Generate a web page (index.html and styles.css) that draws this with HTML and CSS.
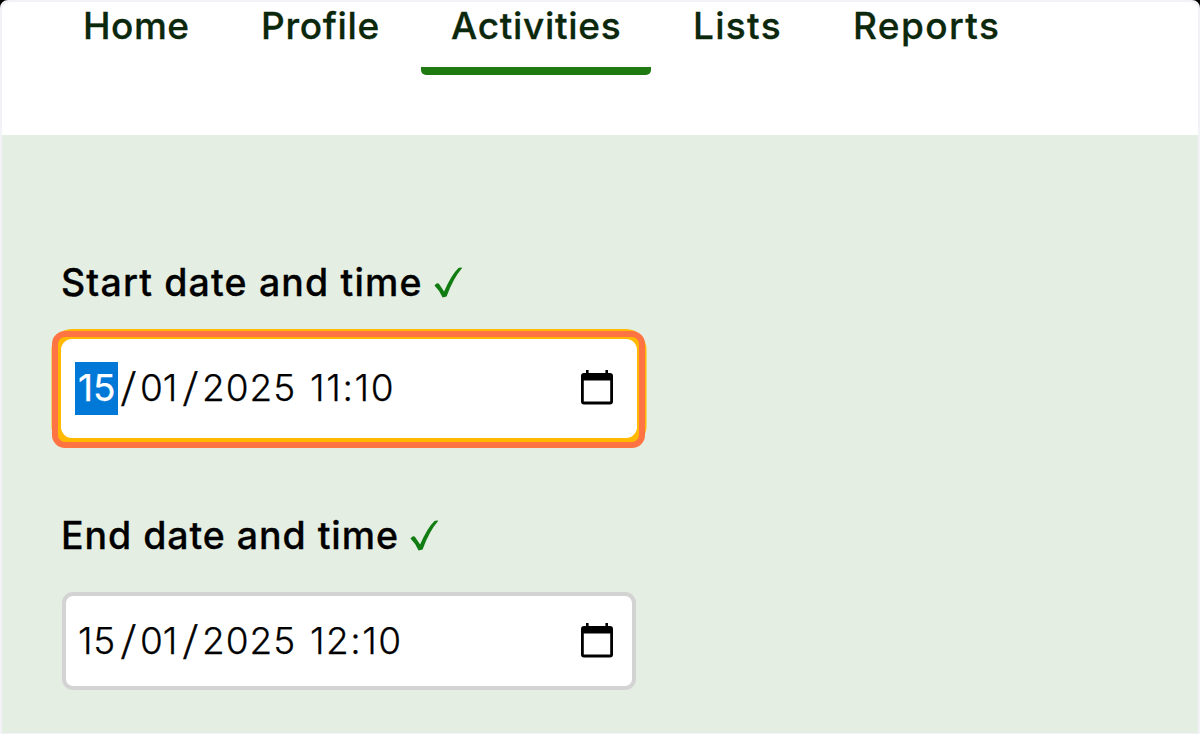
FILE: index.html
```html
<!DOCTYPE html>
<html lang="en">
<head>
<meta charset="utf-8">
<title>Activities</title>
<link rel="stylesheet" href="styles.css">
</head>
<body>
<div class="frame">
  <header class="header">
    <nav class="nav">
      <a class="tab home"><span>Home</span></a>
      <a class="tab profile"><span>Profile</span></a>
      <a class="tab activities active"><span>Activities</span></a>
      <a class="tab lists"><span>Lists</span></a>
      <a class="tab reports"><span>Reports</span></a>
    </nav>
  </header>
  <main class="form">
    <section class="field">
      <div class="label"><span class="label-start">Start date and time</span>
        <svg class="check" viewBox="0 0 30 34"><path d="M0.5 19.5Q3.6 15.500 5.6 18.700L10.100 25.500Q17.500 8.500 24.500 2Q26.200 1.200 28.300 1.700Q19 12.500 12.600 30.500L8.600 31.500Q5.200 24 0.500 19.500Z"/></svg>
      </div>
      <div class="input focused">
        <span class="part day selected">15</span><span class="part slash"><i>/</i></span><span class="part month">01</span><span class="part slash second"><i>/</i></span><span class="part year">2025</span><span class="part time-start">11:10</span>
        <svg class="calendar" viewBox="0 0 32 35"><path fill-rule="evenodd" d="M5 0H7.6V3H24.4V0H27V3H29Q32 3 32 6V31.500Q32 34.500 29 34.500H3Q0 34.500 0 31.500V6Q0 3 3 3H5ZM2.800 10.500V31.500H29.200V10.500Z"/></svg>
        <div class="highlight"></div>
      </div>
    </section>
    <section class="field">
      <div class="label"><span class="label-end">End date and time</span>
        <svg class="check" viewBox="0 0 30 34"><path d="M0.5 19.5Q3.6 15.500 5.6 18.700L10.100 25.500Q17.500 8.500 24.500 2Q26.200 1.200 28.300 1.700Q19 12.500 12.600 30.500L8.600 31.500Q5.200 24 0.500 19.500Z"/></svg>
      </div>
      <div class="input">
        <span class="part day">15</span><span class="part slash"><i>/</i></span><span class="part month">01</span><span class="part slash second"><i>/</i></span><span class="part year">2025</span><span class="part time-end">12:10</span>
        <svg class="calendar" viewBox="0 0 32 35"><path fill-rule="evenodd" d="M5 0H7.6V3H24.4V0H27V3H29Q32 3 32 6V31.500Q32 34.500 29 34.500H3Q0 34.500 0 31.500V6Q0 3 3 3H5ZM2.800 10.500V31.500H29.200V10.500Z"/></svg>
      </div>
    </section>
  </main>
</div>
</body>
</html>
```
FILE: styles.css
```css
* { box-sizing: border-box; }
html { background: #000; }
body { margin: 0; font-family: Inter, "Liberation Sans", sans-serif; }
.frame {
  width: 1200px; height: 734px; overflow: hidden;
  border: 2px solid #f2f2f7; border-bottom-width: 1px;
  border-radius: 8px 8px 0 0; background: #f2f2f7;
  display: flex; flex-direction: column;
}
.header { height: 133px; flex: none; background: #fff; border-radius: 8px 8px 0 0; }
.nav { display: flex; height: 73px; padding-left: 51px; }
.tab {
  flex: none; height: 73px; padding-left: 30px;
  font-size: 37px; font-weight: 500; line-height: 48px; color: #0b280d;
  -webkit-text-stroke: 0.3px #0b280d; white-space: nowrap;
}
.home { width: 178px; letter-spacing: 0.5px; }
.profile { width: 190px; letter-spacing: 0.65px; }
.activities { width: 230px; letter-spacing: 0.7px; }
.lists { width: 160px; margin-left: 12px; letter-spacing: 1.3px; }
.reports { width: 210px; letter-spacing: 1.4px; }
.active { border-bottom: 8px solid #1f7a12; border-radius: 0 0 5px 5px; }
.form {
  flex: 1; min-height: 0; background: #e4eee2;
  padding: 121px 0 0 59px; display: flex; flex-direction: column; gap: 58px;
}
.field { width: 576px; flex: none; height: 195px; }
.label {
  display: flex; align-items: center; gap: 11px; height: 54px; padding-left: 0;
  font-size: 37.500px; font-weight: 500; line-height: 56px; color: #000;
  -webkit-text-stroke: 0.3px #000; white-space: nowrap;
}
.label-start { letter-spacing: 1.15px; }
.label-end { letter-spacing: 0.95px; }
.check { width: 30px; height: 34px; fill: #117c11; flex: none; }
.input {
  position: relative; display: flex; align-items: center;
  width: 574px; height: 98px; margin: 29px 0 0 1px; padding-left: 9px;
  background: #fff; border: 4px solid #d3d3d3; border-radius: 11px;
  font-size: 37px; font-weight: 300; line-height: 52px; color: #000;
  -webkit-text-stroke: 0.25px currentColor; white-space: nowrap;
}
.focused {
  width: 576px; height: 99px; margin: 28.500px 0 0; padding-left: 14px; border: 0;
  box-shadow: 0 -0.500px 0 9.500px #ffb900;
}
.part { flex: none; height: 53px; }
.day { width: 43px; padding-left: 3px; letter-spacing: 0.7px; }
.selected { background: #0078d7; color: #fff; font-weight: 400; letter-spacing: 0; }
.slash { width: 21px; padding-left: 2px; }
.slash i { display: block; font-style: normal; font-weight: 200; font-size: 40px; transform: scaleX(1.25); transform-origin: left center; -webkit-text-stroke: 0.5px currentColor; }
.month { width: 42px; padding-left: 1px; }
.second { width: 20px; padding-left: 1px; }
.year { width: 109px; padding-left: 1px; letter-spacing: 1px; }
.time-start { letter-spacing: 1.65px; }
.time-end { letter-spacing: 1.5px; }
.calendar { position: absolute; left: 514.500px; top: 27px; width: 32px; height: 35px; fill: #000; }
.focused .calendar { left: 519.500px; top: 31.500px; }
.highlight {
  position: absolute; left: -9px; top: -7.500px; width: 593px; height: 117px;
  border: 6px solid #ff7442; border-radius: 13px;
}
```
